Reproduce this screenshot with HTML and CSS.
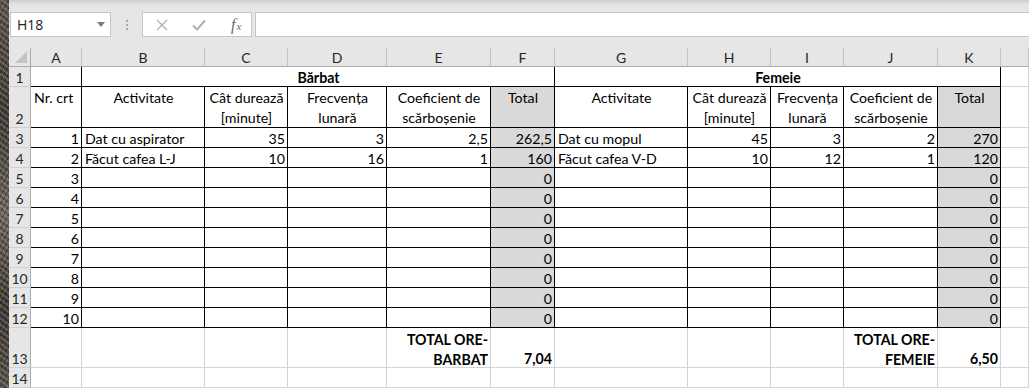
FILE: index.html
```html
<!DOCTYPE html>
<html lang="ro">
<head>
<meta charset="utf-8">
<title>Excel</title>
<link rel="stylesheet" href="styles.css">
</head>
<body>
<div class="app">
  <div class="edge"></div>
  <div class="excel">
    <div class="toolbar">
      <div class="namebox"><span>H18</span><span class="caret"></span></div>
      <div class="grip"><i></i><i></i><i></i></div>
      <div class="fbtns">
        <svg class="ico" width="14" height="14" viewBox="0 0 14 14"><path d="M2 2L12 12M12 2L2 12" stroke="#b0b0b0" stroke-width="1.3" fill="none"/></svg>
        <svg class="ico" width="16" height="14" viewBox="0 0 16 14"><path d="M2 7.5L6 11.5L14 2.5" stroke="#b0b0b0" stroke-width="2" fill="none"/></svg>
        <span class="fx"><i>f</i><em>x</em></span>
      </div>
      <div class="finput"></div>
    </div>
    <div class="sheet">
      <!-- column headers -->
      <div class="corner"><svg width="14" height="14" viewBox="0 0 14 14"><polygon points="13,1 13,13 1,13" fill="#c4c4c4"/></svg></div>
      <div class="ch">A</div><div class="ch">B</div><div class="ch">C</div><div class="ch">D</div><div class="ch">E</div><div class="ch">F</div><div class="ch">G</div><div class="ch">H</div><div class="ch">I</div><div class="ch">J</div><div class="ch">K</div><div class="ch"></div>

      <!-- row 1 -->
      <div class="rh">1</div>
      <div class="c b"></div>
      <div class="c b ctr bold span5">Bărbat</div>
      <div class="c b ctr bold span5">Femeie</div>
      <div class="c"></div>

      <!-- row 2 -->
      <div class="rh">2</div>
      <div class="c b top">Nr. crt</div>
      <div class="c b top ctr">Activitate</div>
      <div class="c b top ctr">Cât durează<br>[minute]</div>
      <div class="c b top ctr">Frecvența<br>lunară</div>
      <div class="c b top ctr">Coeficient de<br>scărboșenie</div>
      <div class="c b top ctr tot">Total</div>
      <div class="c b top ctr">Activitate</div>
      <div class="c b top ctr">Cât durează<br>[minute]</div>
      <div class="c b top ctr">Frecvența<br>lunară</div>
      <div class="c b top ctr">Coeficient de<br>scărboșenie</div>
      <div class="c b top ctr tot">Total</div>
      <div class="c"></div>

      <!-- row 3 -->
      <div class="rh">3</div>
      <div class="c b num">1</div>
      <div class="c b">Dat cu aspirator</div>
      <div class="c b num">35</div>
      <div class="c b num">3</div>
      <div class="c b num">2,5</div>
      <div class="c b num tot">262,5</div>
      <div class="c b">Dat cu mopul</div>
      <div class="c b num">45</div>
      <div class="c b num">3</div>
      <div class="c b num">2</div>
      <div class="c b num tot">270</div>
      <div class="c"></div>

      <!-- row 4 -->
      <div class="rh">4</div>
      <div class="c b num">2</div>
      <div class="c b">Făcut cafea L-J</div>
      <div class="c b num">10</div>
      <div class="c b num">16</div>
      <div class="c b num">1</div>
      <div class="c b num tot">160</div>
      <div class="c b">Făcut cafea V-D</div>
      <div class="c b num">10</div>
      <div class="c b num">12</div>
      <div class="c b num">1</div>
      <div class="c b num tot">120</div>
      <div class="c"></div>

      <!-- row 5 -->
      <div class="rh">5</div>
      <div class="c b num">3</div><div class="c b"></div><div class="c b"></div><div class="c b"></div><div class="c b"></div><div class="c b num tot">0</div>
      <div class="c b"></div><div class="c b"></div><div class="c b"></div><div class="c b"></div><div class="c b num tot">0</div><div class="c"></div>

      <!-- row 6 -->
      <div class="rh">6</div>
      <div class="c b num">4</div><div class="c b"></div><div class="c b"></div><div class="c b"></div><div class="c b"></div><div class="c b num tot">0</div>
      <div class="c b"></div><div class="c b"></div><div class="c b"></div><div class="c b"></div><div class="c b num tot">0</div><div class="c"></div>

      <!-- row 7 -->
      <div class="rh">7</div>
      <div class="c b num">5</div><div class="c b"></div><div class="c b"></div><div class="c b"></div><div class="c b"></div><div class="c b num tot">0</div>
      <div class="c b"></div><div class="c b"></div><div class="c b"></div><div class="c b"></div><div class="c b num tot">0</div><div class="c"></div>

      <!-- row 8 -->
      <div class="rh">8</div>
      <div class="c b num">6</div><div class="c b"></div><div class="c b"></div><div class="c b"></div><div class="c b"></div><div class="c b num tot">0</div>
      <div class="c b"></div><div class="c b"></div><div class="c b"></div><div class="c b"></div><div class="c b num tot">0</div><div class="c"></div>

      <!-- row 9 -->
      <div class="rh">9</div>
      <div class="c b num">7</div><div class="c b"></div><div class="c b"></div><div class="c b"></div><div class="c b"></div><div class="c b num tot">0</div>
      <div class="c b"></div><div class="c b"></div><div class="c b"></div><div class="c b"></div><div class="c b num tot">0</div><div class="c"></div>

      <!-- row 10 -->
      <div class="rh">10</div>
      <div class="c b num">8</div><div class="c b"></div><div class="c b"></div><div class="c b"></div><div class="c b"></div><div class="c b num tot">0</div>
      <div class="c b"></div><div class="c b"></div><div class="c b"></div><div class="c b"></div><div class="c b num tot">0</div><div class="c"></div>

      <!-- row 11 -->
      <div class="rh">11</div>
      <div class="c b num">9</div><div class="c b"></div><div class="c b"></div><div class="c b"></div><div class="c b"></div><div class="c b num tot">0</div>
      <div class="c b"></div><div class="c b"></div><div class="c b"></div><div class="c b"></div><div class="c b num tot">0</div><div class="c"></div>

      <!-- row 12 -->
      <div class="rh">12</div>
      <div class="c b num">10</div><div class="c b"></div><div class="c b"></div><div class="c b"></div><div class="c b"></div><div class="c b num tot">0</div>
      <div class="c b"></div><div class="c b"></div><div class="c b"></div><div class="c b"></div><div class="c b num tot">0</div><div class="c"></div>

      <!-- row 13 -->
      <div class="rh">13</div>
      <div class="c"></div><div class="c"></div><div class="c"></div><div class="c"></div>
      <div class="c num bold wrap">TOTAL ORE-<br>BARBAT</div>
      <div class="c num bold">7,04</div>
      <div class="c"></div><div class="c"></div><div class="c"></div>
      <div class="c num bold wrap">TOTAL ORE-<br>FEMEIE</div>
      <div class="c num bold">6,50</div>
      <div class="c"></div>

      <!-- row 14 -->
      <div class="rh">14</div>
      <div class="c"></div><div class="c"></div><div class="c"></div><div class="c"></div><div class="c"></div><div class="c"></div>
      <div class="c"></div><div class="c"></div><div class="c"></div><div class="c"></div><div class="c"></div><div class="c"></div>
    </div>
  </div>
</div>
</body>
</html>
```

FILE: styles.css
```css
html, body {
  margin: 0;
  padding: 0;
  width: 1029px;
  height: 388px;
  overflow: hidden;
  background: #e6e6e6;
}

.app {
  display: flex;
  width: 1029px;
  height: 388px;
  font-family: Lato, "Liberation Sans", sans-serif;
  color: #000;
}

.edge {
  width: 9px;
  flex: none;
  background:
    repeating-linear-gradient(37deg, rgba(255,255,255,0.18) 0 2px, transparent 2px 5px),
    repeating-linear-gradient(-61deg, rgba(0,0,0,0.35) 0 1px, transparent 1px 4px),
    linear-gradient(#5a534c, #3d3833 30%, #6b645c 55%, #3a3530 80%, #57504a);
}

.excel {
  flex: 1;
  display: flex;
  flex-direction: column;
  min-width: 0;
  overflow: hidden;
}

/* ---------- formula bar ---------- */
.toolbar {
  height: 48px;
  flex: none;
  display: flex;
  align-items: flex-start;
  padding-top: 12px;
  box-sizing: border-box;
  background: linear-gradient(#cdcdcd, #e3e3e3 4px, #e6e6e6 6px);
}

.namebox {
  margin-left: 1px;
  width: 101px;
  height: 25px;
  box-sizing: border-box;
  border: 1px solid #c6c6c6;
  background: #fff;
  display: flex;
  align-items: center;
  justify-content: space-between;
  padding: 0 5px 0 6px;
  font-family: "Open Sans", "Noto Sans", sans-serif;
  font-size: 14px;
  color: #222;
}

.caret {
  width: 0;
  height: 0;
  border-left: 4px solid transparent;
  border-right: 4px solid transparent;
  border-top: 5px solid #7a7a7a;
}

.grip {
  width: 31px;
  height: 25px;
  display: flex;
  flex-direction: column;
  align-items: center;
  justify-content: center;
  gap: 2px;
}

.grip i {
  width: 2px;
  height: 2px;
  background: #a9a9a9;
}

.fbtns {
  width: 110px;
  height: 25px;
  box-sizing: border-box;
  border: 1px solid #c6c6c6;
  background: #fff;
  display: flex;
  align-items: center;
  padding-left: 12px;
  gap: 22px;
}

.fx {
  font-family: "Liberation Serif", serif;
  color: #6a6a6a;
  font-size: 16px;
  line-height: 1;
  display: flex;
  align-items: baseline;
  margin-left: 2px;
}

.fx i {
  font-style: italic;
}

.fx em {
  font-style: italic;
  font-size: 11px;
  margin-left: 1px;
}

.finput {
  margin-left: 3px;
  flex: 1;
  margin-right: -4px;
  height: 25px;
  box-sizing: border-box;
  border: 1px solid #c6c6c6;
  background: #fff;
}

/* ---------- sheet grid ---------- */
.sheet {
  display: grid;
  grid-template-columns: 22px 51px 123px 83px 99px 104px 64px 133px 83px 73px 94px 63px 1fr;
  grid-template-rows: 19px 20px 41px repeat(10, 20px) 40px 20px;
  font-size: 14.2px;
  background: #fff;
}

.sheet > div {
  box-sizing: border-box;
  min-width: 0;
}

.corner {
  background: #e6e6e6;
  border-right: 1px solid #ababab;
  border-bottom: 1px solid #ababab;
  display: flex;
  align-items: flex-end;
  justify-content: flex-end;
  padding: 0 2px 2px 0;
}

.corner svg {
  display: block;
}

.ch {
  background: #e6e6e6;
  border-right: 1px solid #c3c3c3;
  border-bottom: 1px solid #ababab;
  text-align: center;
  padding-top: 1px;
  line-height: 18px;
  font-size: 14px;
  color: #262626;
}

.rh {
  background: #e6e6e6;
  border-right: 1px solid #ababab;
  border-bottom: 1px solid #d0d0d0;
  display: flex;
  align-items: flex-end;
  justify-content: center;
  line-height: 16px;
  font-size: 14px;
  color: #262626;
}

.c {
  background: #fff;
  border-right: 1px solid #d4d4d4;
  border-bottom: 1px solid #d4d4d4;
  padding: 0 2px 0 3px;
  display: flex;
  flex-direction: column;
  justify-content: flex-end;
  line-height: 16px;
  white-space: nowrap;
  overflow: hidden;
}

.b {
  border-right-color: #000;
  border-bottom-color: #000;
}

.span5 {
  grid-column: span 5;
}

.num {
  text-align: right;
}

.ctr {
  text-align: center;
}

.top {
  justify-content: flex-start;
  padding-top: 1px;
  line-height: 20px;
}

.wrap {
  justify-content: flex-start;
  padding-top: 2px;
  line-height: 20px;
}

.tot {
  background: #d9d9d9;
}

.bold {
  font-weight: 700;
}
```
